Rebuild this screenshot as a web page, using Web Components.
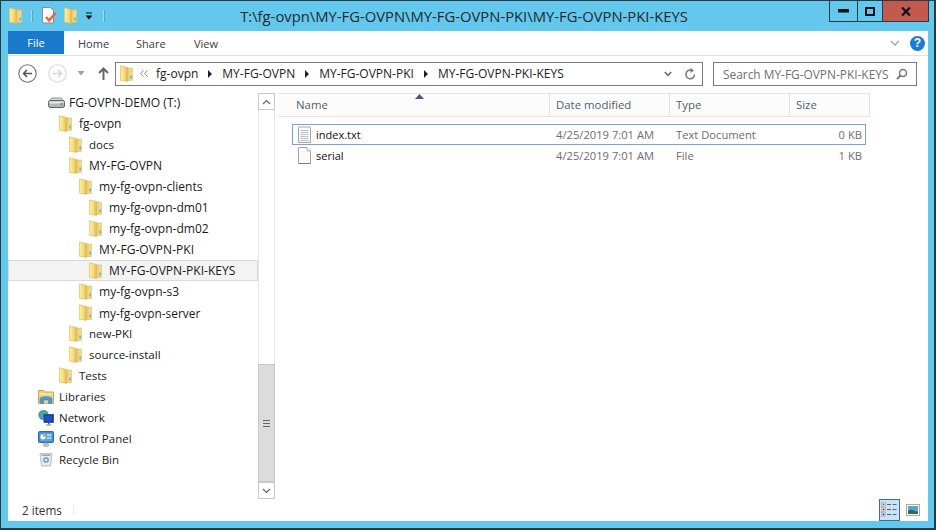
<!DOCTYPE html>
<html><head><meta charset="utf-8"><style>
html,body{margin:0;padding:0;width:936px;height:530px;overflow:hidden;background:#fff}
body{font:12px "Open Sans","Noto Sans",sans-serif}
</style></head><body>
<explorer-window></explorer-window>
<script>
class FolderIcon extends HTMLElement{constructor(){super();this.attachShadow({mode:'open'}).innerHTML=`<style>:host{display:inline-flex;width:13px;height:17px;flex:none}svg{display:block}</style><svg width="13" height="17" viewBox="0 0 13 17"><defs><linearGradient id="a" x1="0" x2="1" y1="0" y2="0"><stop offset="0" stop-color="#fdf0a6"/><stop offset=".6" stop-color="#f5d978"/><stop offset="1" stop-color="#dfb548"/></linearGradient><linearGradient id="b" x1="0" x2="1" y1="0" y2="0"><stop offset="0" stop-color="#e6c566"/><stop offset="1" stop-color="#f3e09a"/></linearGradient></defs><path d="M6 3h6.500v12.500H6z" fill="url(#b)" stroke="#dcbd68" stroke-width=".6"/><path d="M.4 .8 7.600 2.600V16.400L.4 15.200z" fill="url(#a)" stroke="#dcbb62" stroke-width=".7"/><rect x="10.500" y="10.500" width="1.300" height="3" fill="#5ba8dc"/></svg>`}}
customElements.define('folder-icon',FolderIcon);
const ICONS={
drive:`<svg width="17" height="11" viewBox="0 0 17 11"><path d="M2 3.500C2.500 1.500 3.500 1 5 1h7c1.500 0 2.500.5 3 2.500" fill="#d9d9d9" stroke="#8f9294"/><rect x=".5" y="3.500" width="16" height="7" rx="1.800" fill="#b4b7ba" stroke="#5e6164"/><rect x="1.500" y="4.500" width="14" height="2" fill="#e9eaeb"/><rect x="12" y="6" width="3" height="2.500" fill="#5fc24e"/></svg>`,
lib:`<svg width="16" height="14" viewBox="0 0 16 14"><path d="M.5.500h5l1 1.500h9v11a.8.8 0 0 1-.8.800H1.300A.8.8 0 0 1 .5 13z" fill="#efd486" stroke="#c6a652"/><path d="M1 4h14" stroke="#fbeebc"/><path d="M2 13.500V9c0-1.300 1.500-2.300 6-2.300S14 7.700 14 9v4.500h-3.500V10h-5v3.500z" fill="#4f9bd0" stroke="#2f78ad" stroke-width=".5"/></svg>`,
net:`<svg width="16" height="16" viewBox="0 0 16 16"><circle cx="5.500" cy="5" r="4.800" fill="#3f9fd6" stroke="#236c9d" stroke-width=".5"/><path d="M2 2.500c2-1.500 3.500-.5 3.500 1.500s-2 .5-2 2 2 1.500 1.500 3" fill="#4fb544"/><path d="M6 .8c1.500 0 3 1 2.500 2s-1.800 0-2.500-1z" fill="#4fb544"/><rect x="6" y="4.500" width="9.500" height="8" fill="#0d3fb0" stroke="#44484d" stroke-width=".8"/><rect x="7.200" y="5.700" width="7" height="5.500" fill="#1454d4"/><rect x="10" y="12.500" width="1.500" height="2" fill="#55595e"/><rect x="8" y="14.500" width="5.500" height="1" fill="#8a8f94"/></svg>`,
cp:`<svg width="16" height="16" viewBox="0 0 16 16"><rect x=".5" y=".5" width="15" height="11" rx="1" fill="#3f8cd0" stroke="#2c6da8"/><rect x="2" y="2" width="12" height="8" fill="#5aa4e0"/><circle cx="5" cy="5.800" r="2.600" fill="#f3f7fb"/><path d="M5 5.800V3.200a2.600 2.600 0 0 1 2.600 2.600z" fill="#ef9b2d"/><path d="M9 4h4.500M9 7h4.500" stroke="#fff" stroke-width="1.200"/><ellipse cx="8" cy="14" rx="3" ry="1.700" fill="#c6c8ca" stroke="#8a8d90" stroke-width=".5"/><rect x="7" y="11.500" width="2" height="2" fill="#a9acaf"/></svg>`,
bin:`<svg width="14" height="15" viewBox="0 0 14 15" style="margin-left:1px"><path d="M1 1.500h12L11.500 14h-9z" fill="#e4eaee" stroke="#a9b1b6" stroke-width=".8"/><path d="M2.500 2.500h9L11 4H3z" fill="#9ba5ab"/><circle cx="7" cy="8" r="2.200" fill="none" stroke="#4a96d2" stroke-width="1.200"/></svg>`,
txt:`<svg width="13" height="17" viewBox="0 0 13 17" style="display:block"><path d="M.5 1.500 2 .5l1.500 1L5 .5l1.500 1L8 .5l1.500 1 1.500-1 1.500 1v15H.5z" fill="#fbfbfb" stroke="#a3a7ab"/><path d="M2.500 4.500h8M2.500 6.500h8M2.500 8.500h8M2.500 10.500h8M2.500 12.500h8M2.500 14.500h8" stroke="#bcc0c4"/></svg>`,
file:`<svg width="13" height="17" viewBox="0 0 13 17" style="display:block"><path d="M.5.500h8.500l3.500 3.500v12.500H.5z" fill="#fbfbfb" stroke="#a3a6aa"/><path d="M9 .5V4h3.500" fill="#eee" stroke="#b5b8bc"/><path d="M.5 16.500h12" stroke="#7c7f83"/></svg>`
};
class XIcon extends HTMLElement{connectedCallback(){if(this.shadowRoot)return;this.attachShadow({mode:'open'}).innerHTML=`<style>:host{display:inline-flex;align-items:center;justify-content:flex-start}svg{display:block}</style>`+ICONS[this.getAttribute('name')]}}
customElements.define('x-icon',XIcon);

class TitleBar extends HTMLElement{constructor(){super();this.attachShadow({mode:'open'}).innerHTML=`<style>
:host{display:flex;height:30px;position:relative;align-items:flex-start;background:#63c8eb;flex:none}
.qa{display:flex;align-items:center;padding:2px 0 0 8px;height:25px}
.sep{width:1px;height:12px;background:#a8d3e2;border-right:1px solid #4aa9ca}
.t{position:absolute;left:0;right:7px;top:6px;text-align:center;font-size:14.800px;color:#1b2b33;line-height:18px}
.btns{position:absolute;right:5px;top:0;display:flex;height:21px;border:1px solid #2a3a44;border-top:0;box-sizing:border-box}
.b{display:flex;align-items:center;justify-content:center;height:100%}
.b+.b{border-left:1px solid #2a3a44}
</style>
<div class="qa"><folder-icon></folder-icon><span class="sep" style="margin:0 9px 0 9px"></span>
<svg width="15" height="17" viewBox="0 0 15 17" style="margin-right:7px"><path d="M.5.500h8l3 3v12.500H.5z" fill="#fafafa" stroke="#8b8c8d"/><path d="M4 10l3 3.500L13.500 6" fill="none" stroke="#e8623a" stroke-width="2.400"/></svg>
<folder-icon style="margin-right:8px"></folder-icon>
<svg width="8" height="8" viewBox="0 0 8 8" style="margin-right:10px"><path d="M1 1h6" stroke="#111" stroke-width="1"/><path d="M.5 3.500h7L4 7.500z" fill="#111"/></svg>
<span class="sep"></span></div>
<div class="t"><slot></slot></div>
<div class="btns">
<div class="b" style="width:27px"><svg width="11" height="4"><rect width="11" height="3.500" fill="#0b1216"/></svg></div>
<div class="b" style="width:24px"><svg width="10" height="9"><rect x="1" y="1" width="8" height="7" fill="none" stroke="#0b1216" stroke-width="2"/></svg></div>
<div class="b" style="width:45px;background:#c25a50"><svg width="10" height="9" viewBox="0 0 10 9"><path d="M1 .500 9 8.500M9 .500 1 8.500" stroke="#0b1216" stroke-width="2.200"/></svg></div>
</div>`}}
customElements.define('title-bar',TitleBar);

class RibbonTabs extends HTMLElement{constructor(){super();this.attachShadow({mode:'open'}).innerHTML=`<style>
:host{display:flex;height:24px;align-items:stretch;background:#fff;border-bottom:1px solid #e0e0e0;position:relative;font-size:11px;color:#3b3b3b;flex:none}
.f{width:56px;height:23px;background:#1979ca;color:#fff;display:flex;align-items:center;justify-content:center;padding-bottom:1px;box-sizing:border-box}
.x{display:flex;align-items:center}
.r{margin-left:auto;display:flex;align-items:center;gap:10px;padding-right:3px}
.h{width:15px;height:15px;border-radius:50%;background:#1f7bcb;color:#fff;font:bold 12px "Liberation Sans",sans-serif;text-align:center;line-height:15px}
</style><div class="f">File</div><div class="x" style="width:58px;margin-left:14px">Home</div><div class="x" style="width:58px">Share</div><div class="x">View</div>
<div class="r"><svg width="10" height="6" viewBox="0 0 10 6"><path d="M1 1l4 4 4-4" fill="none" stroke="#a9a9a9" stroke-width="1.500"/></svg><div class="h">?</div></div>`}}
customElements.define('ribbon-tabs',RibbonTabs);

class NavRow extends HTMLElement{constructor(){super();this.attachShadow({mode:'open'}).innerHTML=`<style>
:host{display:flex;height:35px;align-items:center;flex:none;background:#fff;padding-left:10px;box-sizing:border-box}
.addr{width:588px;height:24px;border:1px solid #7b7b7b;box-sizing:border-box;display:flex;align-items:center;margin-left:6px;color:#1d1d1d;white-space:nowrap;font-size:12px}
.search{width:204px;height:24px;border:1px solid #7b7b7b;box-sizing:border-box;margin-left:10px;display:flex;align-items:center;padding-left:9px;color:#707070;white-space:nowrap;font-size:11.900px;position:relative}
.tri{width:0;height:0;border-left:4px solid #222;border-top:4px solid transparent;border-bottom:4px solid transparent;margin:0 10px}
.e{margin-left:auto;display:flex;align-items:center;gap:13px;padding-right:6px}
</style>
<svg width="19" height="19" viewBox="0 0 19 19"><circle cx="9.500" cy="9.500" r="8.700" fill="#fff" stroke="#6f6f6f" stroke-width="1.100"/><path d="M14 9.500H6M9 6 5.500 9.500 9 13" fill="none" stroke="#555" stroke-width="1.500"/></svg>
<svg width="19" height="19" viewBox="0 0 19 19" style="margin-left:11px"><circle cx="9.500" cy="9.500" r="8.700" fill="#fff" stroke="#d8d8d8" stroke-width="1.100"/><path d="M5 9.500h8M10 6l3.500 3.500L10 13" fill="none" stroke="#d5d5d5" stroke-width="1.500"/></svg>
<svg width="9" height="5" viewBox="0 0 9 5" style="margin-left:10px"><path d="M.5 0h7L4 4.500z" fill="#a0a0a0"/></svg>
<svg width="11" height="13" viewBox="0 0 11 13" style="margin-left:12px"><path d="M5.500 13V2M1 6l4.500-4.500L10 6" fill="none" stroke="#666" stroke-width="2"/></svg>
<div class="addr"><folder-icon style="margin-left:4px"></folder-icon><svg width="8" height="7" viewBox="0 0 8 7" style="margin:0 8px 0 7px"><path d="M3.500.500.700 3.500l2.800 3M7.500.500 4.700 3.500l2.800 3" fill="none" stroke="#888"/></svg><span>fg-ovpn</span><span class="tri"></span><span>MY-FG-OVPN</span><span class="tri"></span><span>MY-FG-OVPN-PKI</span><span class="tri"></span><span>MY-FG-OVPN-PKI-KEYS</span>
<div class="e"><svg width="8" height="6" viewBox="0 0 8 6"><path d="M.8 1 4 4.500 7.200 1" fill="none" stroke="#666" stroke-width="1.500"/></svg><svg width="11" height="12" viewBox="0 0 11 12"><path d="M9.500 6.500A4.300 4.300 0 1 1 6 2.200" fill="none" stroke="#777" stroke-width="1.500"/><path d="M5.500 0v5L9 2.500z" fill="#777"/></svg></div></div>
<div class="search"><span>Search MY-FG-OVPN-PKI-KEYS</span><svg style="position:absolute;right:8px;top:5px" width="12" height="12" viewBox="0 0 12 12"><circle cx="7" cy="5" r="3.500" fill="none" stroke="#777" stroke-width="1.500"/><path d="M4.500 7.500 1 11" stroke="#777" stroke-width="2"/></svg></div>`}}
customElements.define('nav-row',NavRow);

class TreeRow extends HTMLElement{connectedCallback(){if(this.shadowRoot)return;const l=+this.getAttribute('x');const ic=this.getAttribute('icon');const sel=this.hasAttribute('selected');const wide=this.hasAttribute('wide');
this.attachShadow({mode:'open'}).innerHTML=`<style>:host{display:flex;align-items:center;height:21px;box-sizing:border-box;white-space:nowrap;color:#1a1a1a;padding-left:${l}px;${sel?'background:#f3f3f3;outline:1px solid #d9d9d9;outline-offset:-1px;':''}}
.i{width:${wide?20:17}px;height:17px;display:flex;align-items:center;box-sizing:border-box;padding-left:1px;margin-right:${wide?2:4}px;flex:none}.i x-icon{margin-left:-1px}${wide?'.i x-icon{margin-left:0}':''}</style>
<span class="i">${ic?`<x-icon name="${ic}"></x-icon>`:`<folder-icon></folder-icon>`}</span><slot></slot>`}}
customElements.define('tree-row',TreeRow);

class ScrollBar extends HTMLElement{constructor(){super();this.attachShadow({mode:'open'}).innerHTML=`<style>
:host{display:flex;flex-direction:column;width:17px;flex:none;height:406px;margin-top:2px;box-sizing:border-box;background:#fff}
.a{height:15px;border:1px solid #c9c9c9;display:flex;align-items:center;justify-content:center;background:#fff;width:15px;flex:none}
.s{flex:1;background:#fff;border-left:1px solid #e6e6e6;border-right:1px solid #e6e6e6}
.th{height:116px;background:#dcdcdc;border:1px solid #c9c9c9;width:15px;display:flex;align-items:center;justify-content:center;flex:none}
</style>
<div class="a"><svg width="9" height="6" viewBox="0 0 9 6"><path d="M1 5l3.500-3.500L8 5" fill="none" stroke="#666" stroke-width="1.200"/></svg></div>
<div class="s"></div>
<div class="th"><svg width="7" height="7"><path d="M0 .5h7M0 3.500h7M0 6.500h7" stroke="#666"/></svg></div>
<div class="a"><svg width="9" height="6" viewBox="0 0 9 6"><path d="M1 1l3.500 3.500L8 1" fill="none" stroke="#666" stroke-width="1.200"/></svg></div>`}}
customElements.define('scroll-bar',ScrollBar);

class TreePane extends HTMLElement{constructor(){super();this.attachShadow({mode:'open'}).innerHTML=`<style>
:host{display:flex;flex:none;width:267px;color:#1a1a1a;align-items:flex-start}
.list{width:250px;flex:none;font-size:12.050px;padding-top:1px}
.k{font-size:11.500px}
</style><div class="list">
<tree-row x="39" icon="drive" wide>FG-OVPN-DEMO (T:)</tree-row>
<tree-row x="50">fg-ovpn</tree-row>
<tree-row x="60" class="k">docs</tree-row>
<tree-row x="60">MY-FG-OVPN</tree-row>
<tree-row x="70">my-fg-ovpn-clients</tree-row>
<tree-row x="80">my-fg-ovpn-dm01</tree-row>
<tree-row x="80">my-fg-ovpn-dm02</tree-row>
<tree-row x="70">MY-FG-OVPN-PKI</tree-row>
<tree-row x="80" selected>MY-FG-OVPN-PKI-KEYS</tree-row>
<tree-row x="70">my-fg-ovpn-s3</tree-row>
<tree-row x="70" class="k" style="font-size:11.900px">my-fg-ovpn-server</tree-row>
<tree-row x="60" class="k">new-PKI</tree-row>
<tree-row x="60" class="k">source-install</tree-row>
<tree-row x="50" class="k">Tests</tree-row>
<tree-row x="30" class="k" icon="lib">Libraries</tree-row>
<tree-row x="30" class="k" icon="net">Network</tree-row>
<tree-row x="30" class="k" icon="cp">Control Panel</tree-row>
<tree-row x="30" class="k" icon="bin">Recycle Bin</tree-row>
</div><scroll-bar></scroll-bar>`}}
customElements.define('tree-pane',TreePane);

class FileRow extends HTMLElement{connectedCallback(){if(this.shadowRoot)return;const f=this.hasAttribute('focus');
this.attachShadow({mode:'open'}).innerHTML=`<style>:host{display:grid;grid-template-columns:264px 120px 118px 72px;height:21px;width:574px;box-sizing:border-box;align-items:center;color:#6d6d6d;white-space:nowrap;font-size:11.200px;${f?'outline:1px solid #7da2ce;outline-offset:-1px;':''}}
.n{display:flex;align-items:center;color:#111;padding-left:6px;font-size:11px}.n x-icon{width:13px;margin-right:5px}.s{text-align:right;padding-right:4px}</style>
<div class="n"><x-icon name="${this.getAttribute('icon')}"></x-icon>${this.getAttribute('name')}</div><div>${this.getAttribute('date')}</div><div>${this.getAttribute('type')}</div><div class="s">${this.getAttribute('size')}</div>`}}
customElements.define('file-row',FileRow);

class FilePane extends HTMLElement{constructor(){super();this.attachShadow({mode:'open'}).innerHTML=`<style>
:host{display:flex;flex-direction:column;flex:1;min-width:0;font-size:11.400px;padding:2px 0 0 3px;position:relative}
.h{display:grid;grid-template-columns:272px 120px 120px 80px;width:592px;height:24px;border-top:1px solid #e4e4e4;border-bottom:1px solid #e4e4e4;background:#fcfcfc;box-sizing:border-box;color:#525c70}
.h div{display:flex;align-items:center;padding-left:6px;padding-bottom:1px;border-right:1px solid #e4e4e4;box-sizing:border-box}
.h div:first-child{padding-left:18px}
.r{padding:7px 0 0 14px;display:flex;flex-direction:column}
.sort{position:absolute;left:140px;top:3px}
</style>
<div class="h"><div>Name</div><div>Date modified</div><div>Type</div><div>Size</div></div>
<svg class="sort" width="9" height="5" viewBox="0 0 9 5"><path d="M4.500 0 9 5H0z" fill="#4a5a70"/></svg>
<div class="r"><file-row focus icon="txt" name="index.txt" date="4/25/2019 7:01 AM" type="Text Document" size="0 KB"></file-row>
<file-row icon="file" name="serial" date="4/25/2019 7:01 AM" type="File" size="1 KB"></file-row></div>`}}
customElements.define('file-pane',FilePane);

class StatusBar extends HTMLElement{constructor(){super();this.attachShadow({mode:'open'}).innerHTML=`<style>
:host{display:flex;height:22px;align-items:center;flex:none;background:#fff;position:relative;font-size:11.700px;color:#333;padding-left:14px}
.sp{width:1px;height:12px;background:#eee;margin-left:11px}
.v{margin-left:auto;display:flex;align-items:center;margin-right:8px;gap:6px}
.d{width:21px;height:22px;box-sizing:border-box;background:#c8e4f6;border:1px solid #3c6e96;display:flex;align-items:center;justify-content:center}
</style><span>2 items</span><span class="sp"></span>
<div class="v"><div class="d"><svg width="17" height="16" viewBox="0 0 17 16"><g fill="#fff" stroke="#9a9a9a" stroke-width=".6"><rect x=".5" y=".5" width="4" height="4"/><rect x=".5" y="5.500" width="4" height="4"/><rect x=".5" y="10.500" width="4" height="4"/></g><rect x="1.500" y="6.500" width="2" height="2" fill="#d22"/><rect x="1.500" y="11.500" width="2" height="2" fill="#24c"/><rect x="1.500" y="1.500" width="2" height="2" fill="#777"/><path d="M6 2.500h4M11.500 2.500h4M6 7.500h4M11.500 7.500h4M6 12.500h4M11.500 12.500h4" stroke="#5b6470" stroke-width="1.200"/></svg></div>
<svg width="14" height="12" viewBox="0 0 14 12"><rect x=".5" y=".5" width="13" height="11" fill="#fff" stroke="#a9a9a9"/><rect x="2" y="2" width="10" height="8" fill="#5ba3d0"/><path d="M2 10V7l3-1.500L12 8v2z" fill="#2f6b55"/></svg></div>`}}
customElements.define('status-bar',StatusBar);

class ExplorerWindow extends HTMLElement{constructor(){super();this.attachShadow({mode:'open'}).innerHTML=`<style>
:host{display:flex;flex-direction:column;width:936px;height:530px;box-sizing:border-box;background:#63c8eb;border:1px solid #2a3a44;border-width:1px 2px 2px 1px;color:#1a1a1a}
.in{margin:0 6px 7px 7px;display:flex;flex-direction:column;flex:1;min-height:0;background:#fff}
.main{flex:1;display:flex;min-height:0;background:#fff}
</style>
<title-bar>T:\\fg-ovpn\\MY-FG-OVPN\\MY-FG-OVPN-PKI\\MY-FG-OVPN-PKI-KEYS</title-bar>
<div class="in"><ribbon-tabs></ribbon-tabs><nav-row></nav-row><div class="main"><tree-pane></tree-pane><file-pane></file-pane></div><status-bar></status-bar></div>`}}
customElements.define('explorer-window',ExplorerWindow);
</script></body></html>
